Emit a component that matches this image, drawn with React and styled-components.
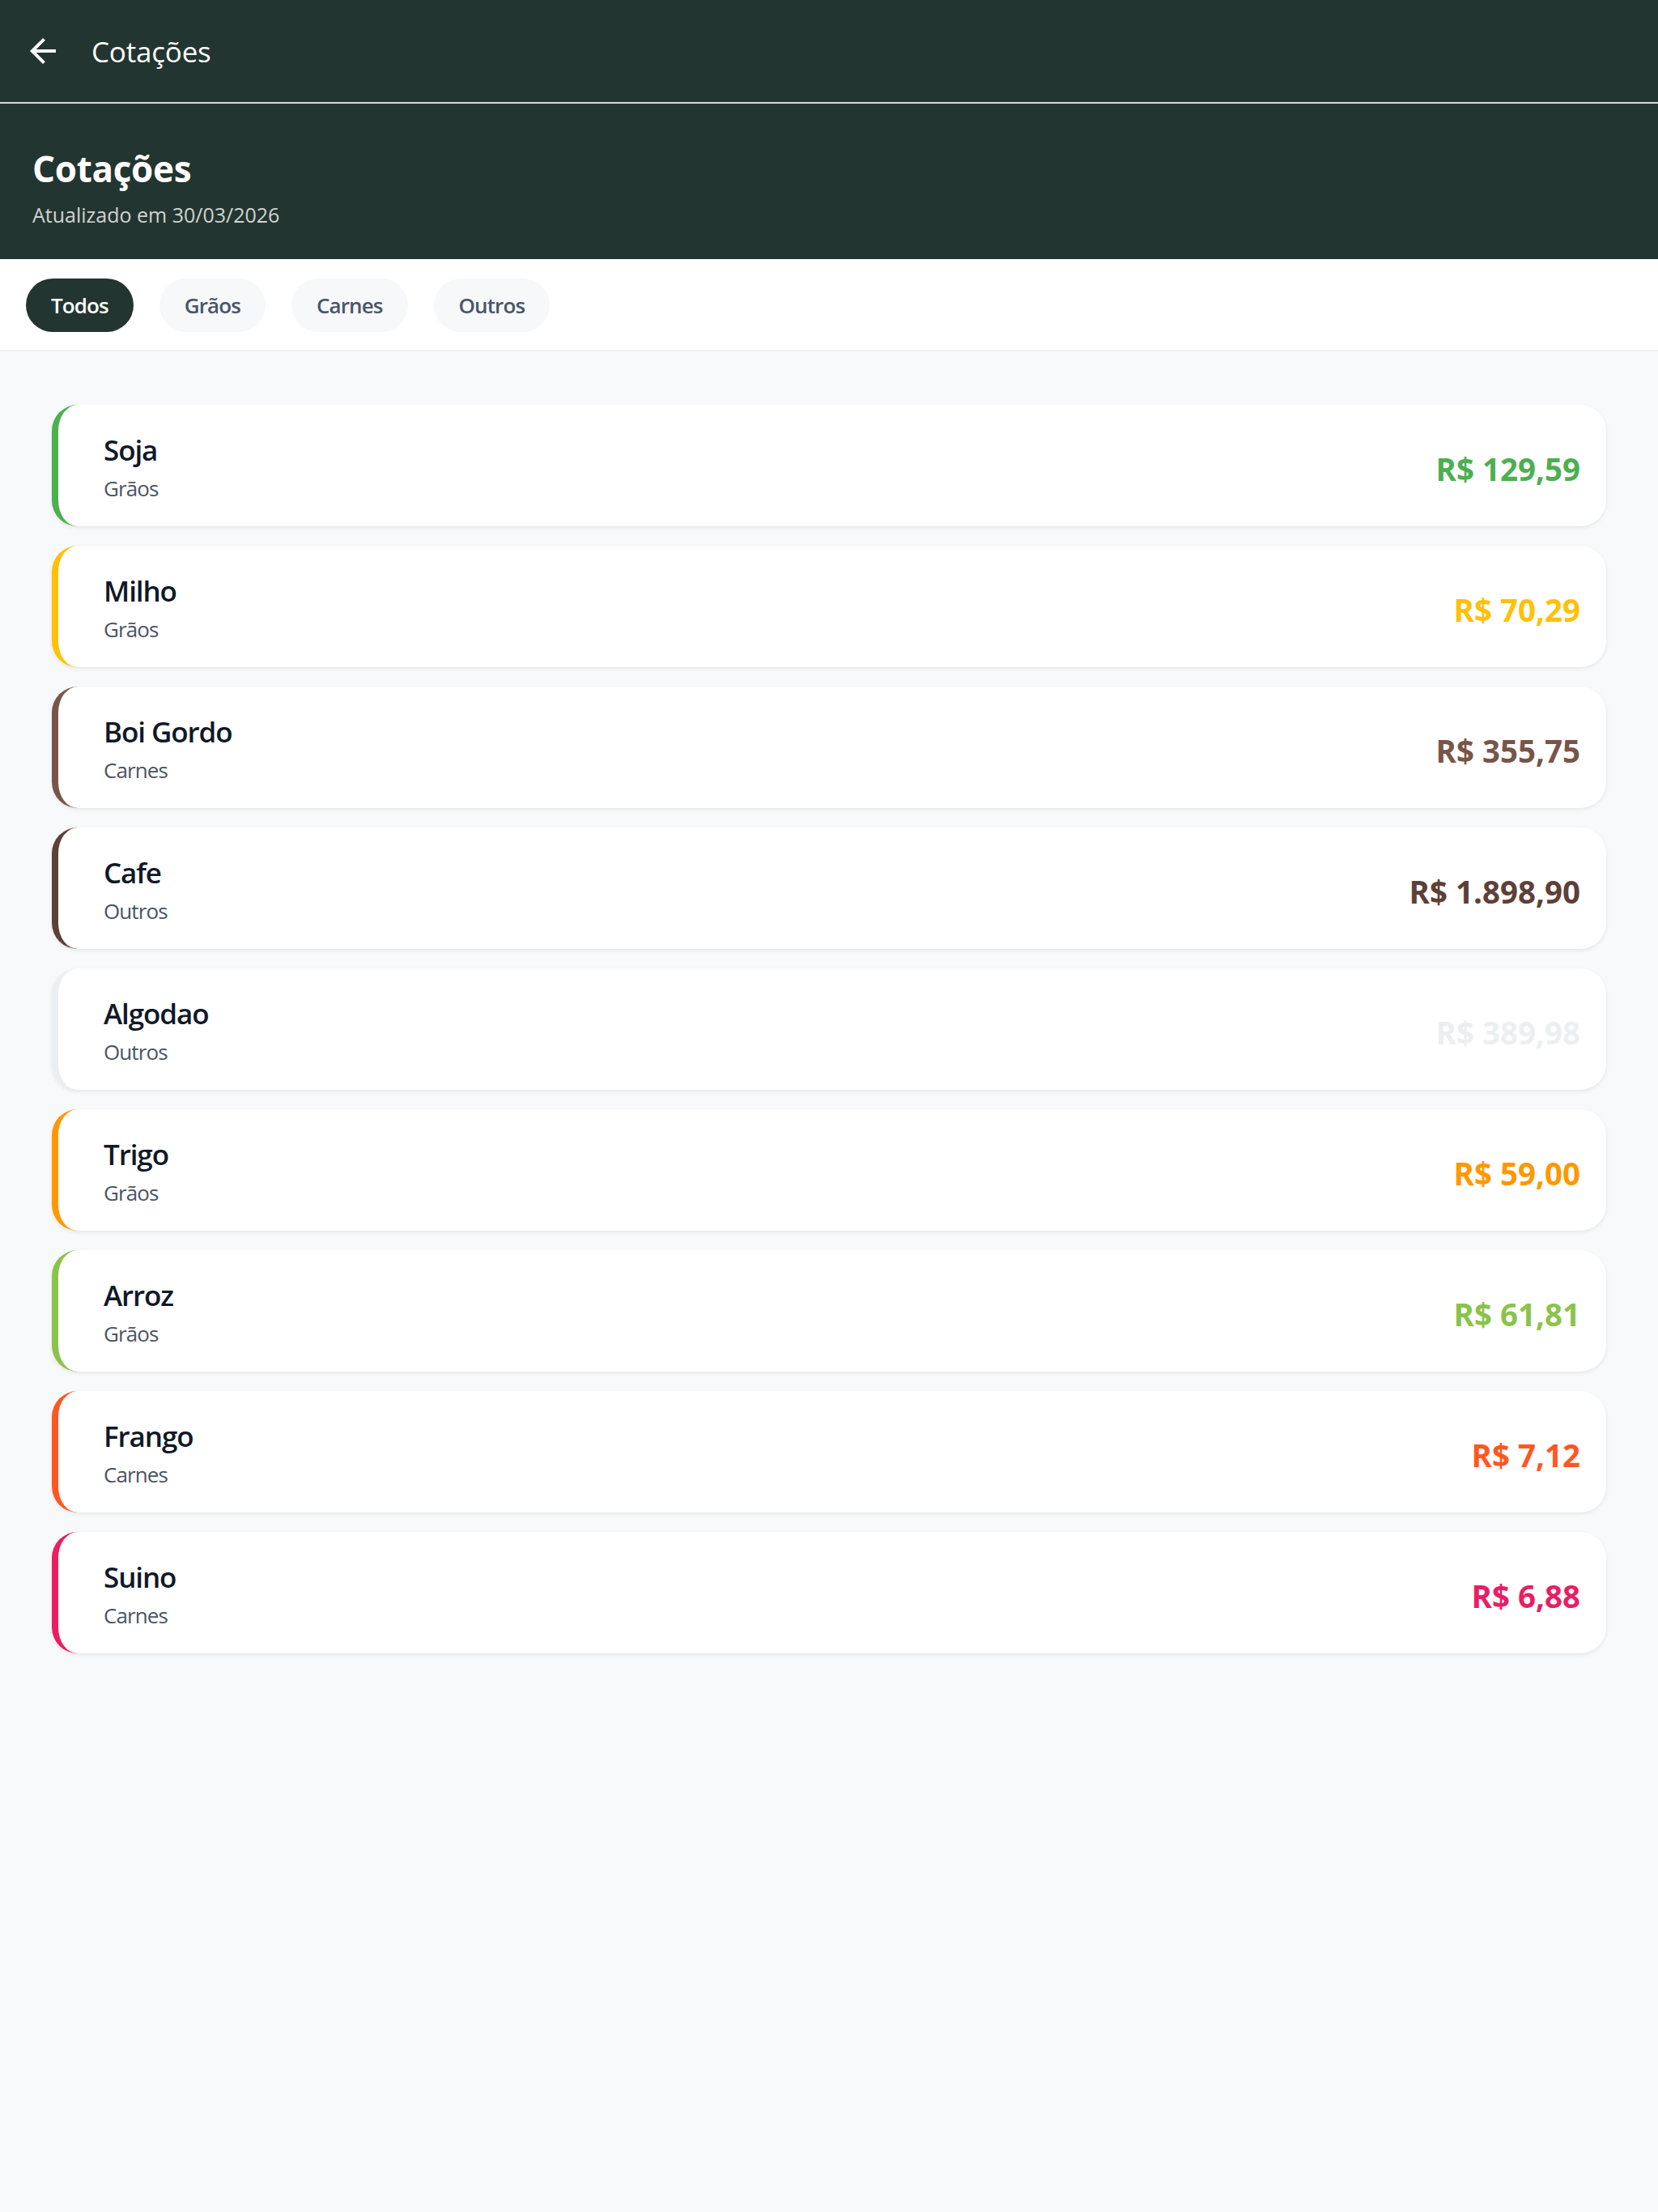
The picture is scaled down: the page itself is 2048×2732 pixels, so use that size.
import React from "react";
import styled, { createGlobalStyle } from "styled-components";

const GlobalStyle = createGlobalStyle`
  html, body {
    margin: 0;
    padding: 0;
    background: #f8f9fa;
  }
  body {
    min-height: 100vh;
    font-family: "Open Sans", "Noto Sans", "Liberation Sans", sans-serif;
    -webkit-font-smoothing: antialiased;
  }
  * { box-sizing: border-box; }
`;

const Page = styled.div`
  min-height: 100vh;
  background: #f8f9fa;
  display: flex;
  flex-direction: column;
`;

const TopBar = styled.header`
  height: 128px;
  background: #233530;
  border-bottom: 2px solid #d9dcda;
  display: flex;
  align-items: center;
  gap: 36px;
  padding: 2px 0 0 29px;
`;

const BackButton = styled.button`
  width: 48px;
  height: 48px;
  padding: 0;
  margin-top: -2px;
  border: none;
  background: transparent;
  color: #ffffff;
  display: flex;
  align-items: center;
  justify-content: center;
  cursor: pointer;
  svg { display: block; }
`;

const TopTitle = styled.h1`
  margin: 0;
  color: #ffffff;
  font-size: 35px;
  line-height: 48px;
  font-weight: 400;
  letter-spacing: -0.2px;
`;

const Hero = styled.section`
  background: #233530;
  padding: 50px 40px 38px 40px;
  display: flex;
  flex-direction: column;
  gap: 9px;
`;

const HeroTitle = styled.h2`
  margin: 0;
  color: #ffffff;
  font-size: 44px;
  line-height: 61px;
  font-weight: 700;
  letter-spacing: -0.3px;
`;

const HeroSubtitle = styled.p`
  margin: 0;
  color: #ced4d1;
  font-size: 25px;
  line-height: 34px;
  font-weight: 400;
`;

const FilterBar = styled.nav`
  background: #ffffff;
  border-bottom: 2px solid #eef0f3;
  padding: 24px 32px 22px;
  display: flex;
  gap: 32px;
`;

const Pill = styled.button`
  height: 66px;
  padding: 0 31px;
  border: none;
  border-radius: 33px;
  background: ${(p) => (p.$active ? "#233530" : "#f6f8fa")};
  color: ${(p) => (p.$active ? "#ffffff" : "#4a5568")};
  font-family: inherit;
  font-size: 26px;
  letter-spacing: -0.9px;
  font-weight: 600;
  cursor: pointer;
`;

const List = styled.main`
  padding: 66px 64px 64px;
  display: flex;
  flex-direction: column;
  gap: 24px;
`;

const Card = styled.article`
  height: 150px;
  background: #ffffff;
  border-left: 8px solid ${(p) => p.$color};
  border-radius: 32px;
  box-shadow: 0 2px 5px rgba(0, 0, 0, 0.08);
  padding: 0 32px 0 56px;
  display: flex;
  align-items: center;
  justify-content: space-between;
`;

const Info = styled.div`
  display: flex;
  flex-direction: column;
  gap: 4px;
  margin-top: 4px;
`;

const Name = styled.div`
  color: #111827;
  font-size: 35px;
  line-height: 48px;
  font-weight: 600;
  letter-spacing: -1.1px;
`;

const Category = styled.div`
  color: #4b5563;
  font-size: 26px;
  line-height: 38px;
  font-weight: 400;
  letter-spacing: -0.9px;
`;

const Price = styled.div`
  color: ${(p) => p.$color};
  font-size: 38.5px;
  line-height: 50px;
  font-weight: 700;
  margin-top: 8px;
`;

const items = [
  { name: "Soja", cat: "Grãos", price: "R$ 129,59", color: "#4caf50" },
  { name: "Milho", cat: "Grãos", price: "R$ 70,29", color: "#ffc107" },
  { name: "Boi Gordo", cat: "Carnes", price: "R$ 355,75", color: "#795548" },
  { name: "Cafe", cat: "Outros", price: "R$ 1.898,90", color: "#5d4037" },
  { name: "Algodao", cat: "Outros", price: "R$ 389,98", color: "#eceff1" },
  { name: "Trigo", cat: "Grãos", price: "R$ 59,00", color: "#ff9800" },
  { name: "Arroz", cat: "Grãos", price: "R$ 61,81", color: "#8bc34a" },
  { name: "Frango", cat: "Carnes", price: "R$ 7,12", color: "#ff5722" },
  { name: "Suino", cat: "Carnes", price: "R$ 6,88", color: "#e91e63" },
];

const filters = ["Todos", "Grãos", "Carnes", "Outros"];

export default function App() {
  return (
    <>
      <GlobalStyle />
      <Page>
        <TopBar>
          <BackButton aria-label="Voltar">
            <svg width="48" height="48" viewBox="0 0 24 24" fill="currentColor">
              <path d="M20 11H7.83l5.59-5.59L12 4l-8 8 8 8 1.41-1.41L7.83 13H20v-2z" />
            </svg>
          </BackButton>
          <TopTitle>Cotações</TopTitle>
        </TopBar>
        <Hero>
          <HeroTitle>Cotações</HeroTitle>
          <HeroSubtitle>Atualizado em 30/03/2026</HeroSubtitle>
        </Hero>
        <FilterBar>
          {filters.map((f, i) => (
            <Pill key={f} $active={i === 0}>
              {f}
            </Pill>
          ))}
        </FilterBar>
        <List>
          {items.map((it) => (
            <Card key={it.name} $color={it.color}>
              <Info>
                <Name>{it.name}</Name>
                <Category>{it.cat}</Category>
              </Info>
              <Price $color={it.color}>{it.price}</Price>
            </Card>
          ))}
        </List>
      </Page>
    </>
  );
}
